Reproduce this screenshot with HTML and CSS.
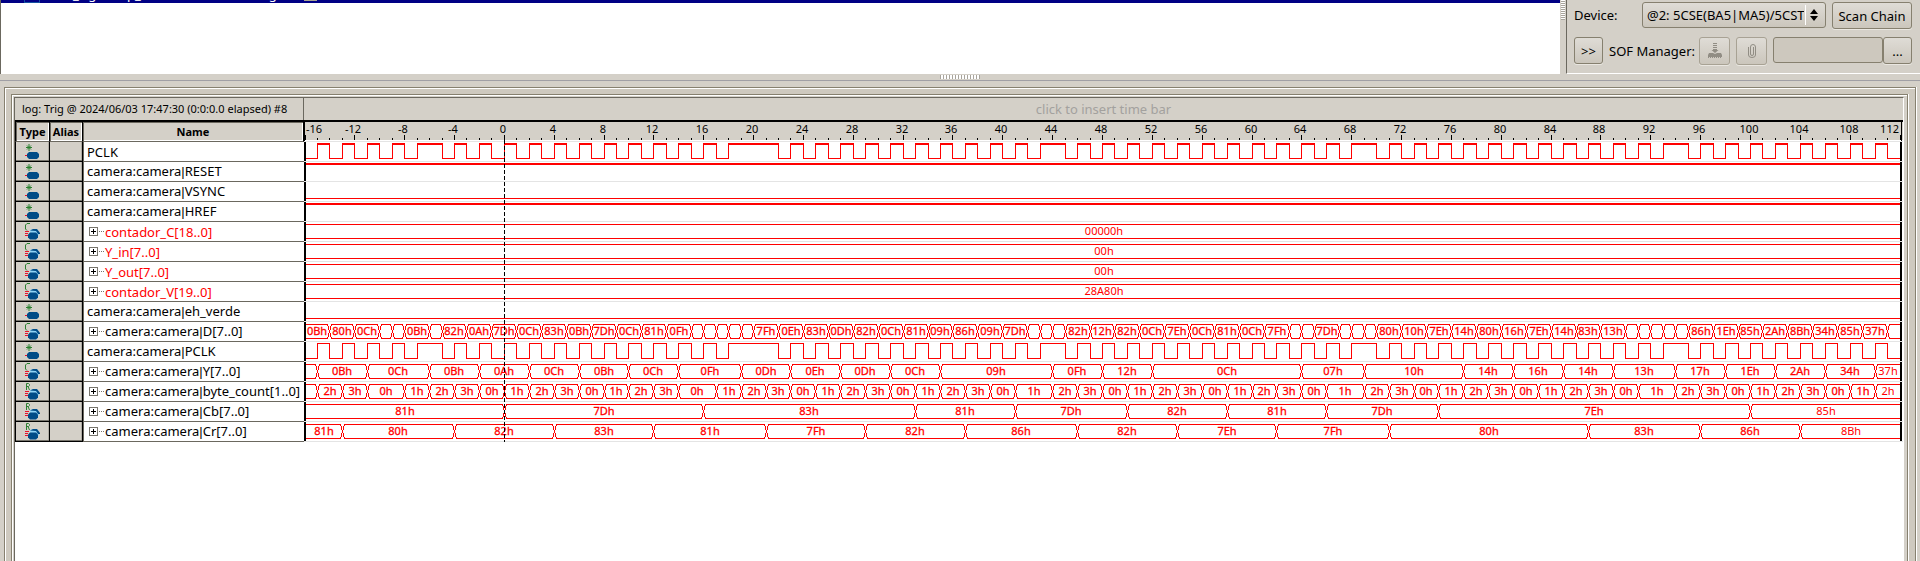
FILE: index.html
```html
<!DOCTYPE html>
<html lang="en">
<head>
<meta charset="utf-8">
<title>Signal Tap Logic Analyzer</title>
<link rel="stylesheet" href="styles.css">
</head>
<body>
<svg class="defs" aria-hidden="true">
  <symbol id="pin" viewBox="0 0 16 18">
    <path d="M5 1v7M2 4.500h6M3 2.500l4 4M7 2.500l-4 4" stroke="#2a8030" fill="none"/>
    <path d="M1 12.500h3" stroke="#e8102c"/>
    <path d="M5 9h8l2 2v3l-2 2H5l-2-2v-3z" fill="#004b87"/>
  </symbol>
  <symbol id="bus" viewBox="0 0 16 18">
    <path d="M1 8.500h4M1 10.500h3M1 12.500h3" stroke="#e8102c"/>
    <path d="M6 7l3-1h4l2 3v3l-2 2H7z" fill="#8fd3f5"/>
    <path d="M6 7.500L9 6h4l3 4v1h-2l-2-3z" fill="#004b87"/>
    <path d="M6 9.500h6l2 2v3l-2 2H6l-2-2v-3z" fill="#004b87"/>
  </symbol>
  <symbol id="comb" viewBox="0 0 16 18">
    <use href="#bus"/>
    <path d="M6 .5H3L1.500 2v4L3 7.500" stroke="#2a8030" fill="none"/>
  </symbol>
  <symbol id="reg" viewBox="0 0 16 18">
    <use href="#bus"/>
    <path d="M2.500 7V.5h2l1 1v1l-1 1h-2m1.500 0L5.500 7" stroke="#2a8030" fill="none"/>
  </symbol>
</svg>

<section class="top">
  <div class="instances">
    <div class="selected"><span class="box"></span><span class="inst">auto_signaltap_0</span><span class="status">Not running</span><span class="flag"></span></div>
  </div>
  <div class="vsplit"><span class="vgrip"></span></div>
  <form class="chain">
    <div class="line">
      <label class="dlabel" for="device">Device:</label>
      <span class="combo">
        <select id="device"><option>@2: 5CSE(BA5|MA5)/5CSTFD5D5/..</option></select>
        <svg class="arrows" viewBox="0 0 8 12" aria-hidden="true"><path d="M4 0l4 5H0zM4 12l4-5H0z"/></svg>
      </span>
      <button type="button" class="btn scan">Scan Chain</button>
    </div>
    <div class="line sof">
      <button type="button" class="btn more">&gt;&gt;</button>
      <label class="slabel" for="sof">SOF Manager:</label>
      <button type="button" class="btn icon" disabled aria-label="Program device">
        <svg viewBox="0 0 16 16" width="16" height="16"><path d="M6 .5h4M6 2.500h4M6 4.500h4" stroke="#918d84"/><path d="M6 6h4v1h1.500L8 10 4.500 7H6z" fill="#918d84"/><path d="M2 10h4l2 1 2-1h4l1 2v2H1v-2z" fill="#918d84"/><path d="M1 14.500h14" stroke="#918d84" stroke-dasharray="1 1"/></svg>
      </button>
      <button type="button" class="btn icon attach" disabled aria-label="Attach file">
        <svg viewBox="0 0 16 16" width="16" height="16"><path d="M4.500 4v8q0 2.500 3.500 2.500t3.500-2.500V4q0-2.500-2.500-2.500T6.500 4v7q0 1.500 1.500 1.500T9.500 11V4" fill="none" stroke="#918d84"/></svg>
      </button>
      <input id="sof" type="text" disabled>
      <button type="button" class="btn dots">...</button>
    </div>
  </form>
</section>
<div class="hsplit"><span class="hgrip"></span></div>

<main class="outer">
  <div class="inner">
    <div class="viewer">
      <div class="log">log: Trig @ 2024/06/03 17:47:30 (0:0:0.0 elapsed) #8</div>
      <div class="timebar">click to insert time bar</div>
      <table class="nodes">
        <thead><tr><th class="type">Type</th><th class="alias">Alias</th><th class="name">Name</th></tr></thead>
        <tbody id="nodes"></tbody>
      </table>
      <div class="waves" id="waves"></div>
    </div>
  </div>
</main>
<script src="script.js"></script>
</body>
</html>
```

FILE: styles.css
```css
* { box-sizing: border-box; }
body {
  margin: 0;
  height: 100vh;
  display: flex;
  flex-direction: column;
  overflow: hidden;
  background: #d4d0c8;
  color: #000;
  font-family: "Noto Sans", "Open Sans", sans-serif;
  font-size: 13px;
}
.defs { position: absolute; width: 0; height: 0; }

.top { display: flex; flex: none; height: 74px; }
.instances { flex: 1; background: #fff; border-left: 1px solid #6b685f; }
.selected {
  display: flex;
  align-items: flex-end;
  height: 3px;
  background: #000084;
  color: #fff;
  line-height: 18px;
  overflow: hidden;
  white-space: nowrap;
}
.box { width: 16px; height: 16px; margin-left: 23px; border: 1px solid #1450a0; }
.inst { width: 157px; margin-left: 5px; }
.status { width: 80px; }
.flag { width: 13px; height: 8px; margin-left: 22px; margin-bottom: 2px; background: #a8a490; }
.vsplit { width: 6px; padding-left: 1px; }
.vgrip {
  display: block;
  width: 4px;
  height: 20px;
  background: repeating-linear-gradient(#fff 0 1px, #a8a49c 1px 2px);
}
.chain {
  display: flex;
  flex-direction: column;
  width: 354px;
  padding: 2px 8px 0 7px;
  border-left: 1px solid #6b685f;
  border-bottom: 1px solid #fff;
}
.line { display: flex; align-items: flex-start; height: 35px; }
.dlabel, .slabel { line-height: 27px; white-space: nowrap; }
.dlabel { width: 68px; padding-left: 0; }
.slabel { width: 96px; padding-left: 6px; line-height: 28px; }
.combo { position: relative; width: 184px; margin-right: 6px; }
.combo select {
  display: block;
  width: 100%;
  height: 26px;
  padding: 0 21px 0 4px;
  appearance: none;
  font: inherit;
  color: #000;
}
.combo select, .btn {
  border: 1px solid #86806f;
  border-radius: 3px;
  background: linear-gradient(#dfdcd6, #cbc6bc);
}
.combo::after {
  content: "";
  position: absolute;
  right: 20px;
  top: 3px;
  bottom: 3px;
  width: 1px;
  background: #fff;
}
.arrows { position: absolute; right: 8px; top: 7px; width: 8px; height: 12px; }
.btn {
  height: 27px;
  padding: 0;
  font: inherit;
  color: #000;
  box-shadow: 0 1px 0 #eae7e1;
}
.scan { width: 80px; }
.more { width: 29px; }
.icon {
  display: flex;
  align-items: center;
  justify-content: center;
  width: 31px;
  height: 28px;
  border-color: #a8a294;
}
.attach { margin: 0 6px; }
.sof input {
  flex: 1;
  min-width: 0;
  height: 26px;
  border: 1px solid #86806f;
  border-radius: 3px;
  background: #cdc8be;
}
.dots { width: 29px; }

.hsplit {
  flex: none;
  height: 7px;
  padding-top: 1px;
  border-bottom: 1px solid #a09fa5;
}
.hgrip {
  display: block;
  width: 40px;
  height: 4px;
  margin: 0 auto;
  background: repeating-linear-gradient(90deg, #a8a49c 0 1px, #fff 1px 3px);
}

.outer, .inner {
  display: flex;
  flex: 1;
  min-height: 0;
  border-style: solid;
  border-width: 1px 1px 0;
  border-color: #86806f;
  box-shadow: inset 1px 1px 0 #fff, 1px 0 0 #fff;
}
.outer { margin: 6px 4px 0; padding: 6px 7px 0 6px; background: #cec9bf; }
.inner { padding: 2px 3px 0 2px; background: #d4d0c8; }
.viewer {
  flex: 1;
  display: grid;
  grid-template-columns: 289px minmax(0, 1fr);
  grid-template-rows: 22px 1fr;
  border-top: 1px solid #6b685f;
  border-left: 1px solid #6b685f;
  border-right: 1px solid #fff;
  background: #fff;
}
.log, .timebar { background: #d4d0c8; white-space: nowrap; line-height: 22px; }
.log { padding-left: 7px; font-size: 11px; border-right: 1px solid #6b685f; }
.timebar { text-align: center; color: #a3a19e; }

.nodes {
  width: 289px;
  height: 322px;
  border-collapse: separate;
  border-spacing: 0;
  table-layout: fixed;
  border-top: 2px solid #000;
}
.nodes th, .nodes td { height: 20px; padding: 0; line-height: 18px; }
.nodes th {
  background: #d4d0c8;
  font-size: 11px;
  border-bottom: 1px solid #6b685f;
  border-right: 1px solid #000;
  box-shadow: inset 1px 1px 0 #6b685f, inset -1px -1px 0 #fff;
}
.nodes .type { width: 35px; border-left: 1px solid #000; }
.nodes .alias { width: 33px; }
.nodes td.type, .nodes td.alias {
  background: #d4d0c8;
  border-bottom: 1px solid #000;
  border-right: 1px solid #000;
  box-shadow: inset 0 -1px 0 #77746c, inset -1px 0 0 #b0aca4;
}
.nodes td.name {
  padding-left: 3px;
  border-left: 1px solid #6b685f;
  border-bottom: 1px solid #6b685f;
  white-space: nowrap;
}
.glyph { display: block; width: 16px; height: 18px; margin: 1px 0 0 8px; }
.group { display: flex; align-items: center; padding-left: 2px; }
.plus {
  flex: none;
  width: 9px;
  height: 9px;
  padding: 0;
  border: 1px solid #77746c;
  background:
    linear-gradient(#000, #000) center / 5px 1px no-repeat,
    linear-gradient(#000, #000) center / 1px 5px no-repeat,
    #fff;
}
.stem { flex: none; width: 5px; margin: 0 1px; border-top: 1px dotted #77746c; }
.bar { font-family: "Liberation Sans", sans-serif; }
.unassigned { color: #f00; }

.waves { overflow: hidden; border-top: 2px solid #000; }
.plot { display: block; }
.ruler { fill: #d4d0c8; }
.tick, .edge { fill: #000; }
.sep { fill: #e4e4e4; }
.num { font-size: 11px; fill: #000; text-anchor: middle; }
.num.first { text-anchor: start; }
.num.last { text-anchor: end; }
.trace { fill: none; stroke: #f00; shape-rendering: crispEdges; }
.high { fill: #f00; }
.val { font-size: 11px; fill: #f00; stroke: #f00; stroke-width: .3px; text-anchor: middle; }
.cut { stroke: none; }
.cursor { stroke: #000; stroke-dasharray: 4 2; shape-rendering: crispEdges; }
```

FILE: script.js
```javascript
const START = -16;
const END = 112;
const ROW = 20;

const clockEdges = [];
for (const [from, to] of [[-15, -7], [-4, 18], [23, 43], [46, 68], [71, 93], [96, 111]]) {
  for (let t = from; t <= to; t++) clockEdges.push(t);
}
clockEdges.push(-5, 22, 45, 70, 95);
clockEdges.sort((a, b) => a - b);

// Bus data is "start:value" pairs; an empty value is too short to print.
const parse = text => text.split(' ').map(item => {
  const [t, v] = item.split(':');
  return [Number(t), v ? v + 'h' : ''];
});

const counterTimes = [-15, -13, -11, -8, -6, -4, -2, 0, 2, 4, 6, 8, 10, 12, 14, 17, 19, 21, 23, 25, 27, 29, 31,
  33, 35, 37, 39, 41, 44, 46, 48, 50, 52, 54, 56, 58, 60, 62, 64, 66, 69, 71, 73, 75, 77, 79, 81, 83, 85, 87,
  89, 91, 94, 96, 98, 100, 102, 104, 106, 108, 110];
const counter = [[-16, '']].concat(counterTimes.map((t, i) => [t, (i + 2) % 4 + 'h']));

const rows = [
  { name: 'PCLK', icon: 'pin', clock: true, thick: true },
  { name: 'camera:camera|RESET', icon: 'pin', level: 1 },
  { name: 'camera:camera|VSYNC', icon: 'pin', level: 0 },
  { name: 'camera:camera|HREF', icon: 'pin', level: 1 },
  { name: 'contador_C[18..0]', icon: 'comb', red: true, bus: parse('-16:00000') },
  { name: 'Y_in[7..0]', icon: 'comb', red: true, bus: parse('-16:00') },
  { name: 'Y_out[7..0]', icon: 'comb', red: true, bus: parse('-16:00') },
  { name: 'contador_V[19..0]', icon: 'comb', red: true, bus: parse('-16:28A80') },
  { name: 'camera:camera|eh_verde', icon: 'pin', level: 0 },
  { name: 'camera:camera|D[7..0]', icon: 'comb', bus: parse('-16:0B -14:80 -12:0C -10: -9: -8:0B -6: -5:82 -3:0A -1:7D 1:0C 3:83 5:0B 7:7D 9:0C 11:81 13:0F 15: 16: 17: 18: 19: 20:7F 22:0E 24:83 26:0D 28:82 30:0C 32:81 34:09 36:86 38:09 40:7D 42: 43: 44: 45:82 47:12 49:82 51:0C 53:7E 55:0C 57:81 59:0C 61:7F 63: 64: 65:7D 67: 68: 69: 70:80 72:10 74:7E 76:14 78:80 80:16 82:7E 84:14 86:83 88:13 90: 91: 92: 93: 94: 95:86 97:1E 99:85 101:2A 103:8B 105:34 107:85 109:37 111:') },
  { name: 'camera:camera|PCLK', icon: 'pin', clock: true },
  { name: 'camera:camera|Y[7..0]', icon: 'comb', bus: parse('-16: -15:0B -11:0C -6:0B -2:0A 2:0C 6:0B 10:0C 14:0F 19:0D 23:0E 27:0D 31:0C 35:09 44:0F 48:12 52:0C 64:07 69:10 77:14 81:16 85:14 89:13 94:17 98:1E 102:2A 106:34 110:37') },
  { name: 'camera:camera|byte_count[1..0]', icon: 'reg', bus: counter },
  { name: 'camera:camera|Cb[7..0]', icon: 'reg', bus: parse('-16:81 0:7D 16:83 33:81 41:7D 50:82 58:81 66:7D 75:7E 100:85') },
  { name: 'camera:camera|Cr[7..0]', icon: 'reg', bus: parse('-16:81 -13:80 -4:82 4:83 12:81 21:7F 29:82 37:86 46:82 54:7E 62:7F 71:80 87:83 96:86 104:8B') }
];

document.getElementById('nodes').innerHTML = rows.map(r => {
  const text = r.name.replace('|', '<span class="bar">|</span>');
  const label = r.bus
    ? `<div class="group"><button type="button" class="plus" aria-label="Expand ${r.name}"></button><span class="stem"></span><span class="${r.red ? 'unassigned' : ''}">${text}</span></div>`
    : text;
  return `<tr><td class="type"><svg class="glyph"><use href="#${r.icon}"/></svg></td><td class="alias"></td><td class="name">${label}</td></tr>`;
}).join('');

const host = document.getElementById('waves');

function draw() {
  const width = host.clientWidth;
  const x = t => Math.floor(1 + (t - START) * (width - 4) / (END - START));
  const rect = (cls, px, py, w, h) => `<rect class="${cls}" x="${px}" y="${py}" width="${w}" height="${h}"/>`;
  const height = ROW * (rows.length + 1);
  const right = width - 3;
  let out = rect('ruler', 0, 0, width, 18) + rect('sep', 0, 19, width, 1);

  for (let t = START; t <= END; t++) {
    const major = t % 4 === 0;
    out += rect('tick', x(t), major ? 13 : 16, 1, major ? 5 : 2);
    if (!major) continue;
    if (t === START) out += `<text class="num first" x="2" y="11">${t}</text>`;
    else if (t === END) out += `<text class="num last" x="${width - 4}" y="11">${t}</text>`;
    else out += `<text class="num" x="${x(t) - 1}" y="11">${t}</text>`;
  }

  rows.forEach((r, i) => {
    const y = ROW * (i + 1);
    const hi = y + 1.5;
    const lo = y + 16.5;
    out += rect('sep', 0, y + 19, width, 1);
    if (r.clock) {
      let d = `M2 ${lo}`;
      let up = false;
      clockEdges.forEach((t, k) => {
        const px = x(t) + 0.5;
        up = !up;
        d += `H${px}V${up ? hi : lo}`;
        if (up && r.thick) out += rect('high', x(t), y + 1, x(clockEdges[k + 1]) - x(t) + 1, 2);
      });
      out += `<path class="trace" d="${d}H${right}"/>`;
    } else if (r.bus) {
      const top = y + 2.5;
      let d = '';
      r.bus.forEach(([t, v], k) => {
        const last = k === r.bus.length - 1;
        const a = k ? x(t) + 0.5 : 2;
        const b = last ? width - 1 : x(r.bus[k + 1][0]) + 0.5;
        const l = k ? a + 3 : a;
        const e = last ? b : b - 3;
        d += `M${l} ${top}H${e}M${l} ${lo}H${e}`;
        if (k) d += `M${a - 3} ${top}h1L${a + 2} ${lo}h1M${a - 3} ${lo}h1L${a + 2} ${top}h1`;
        if (v) out += `<text class="val${last ? ' cut' : ''}" x="${Math.floor((a + b) / 2)}" y="${y + 13}">${v}</text>`;
      });
      out += `<path class="trace" d="${d}"/>`;
    } else if (r.level) {
      out += rect('high', 2, y + 1, right, 2);
    } else {
      out += `<path class="trace" d="M2 ${lo}H${right}"/>`;
    }
    out += rect('edge', 0, y, 2, 19) + rect('edge', width - 3, y, 2, 19);
  });
  out += rect('edge', 0, 0, 1, 19) + rect('edge', width - 2, 0, 1, 19);
  out += `<path class="cursor" d="M${x(0) + 0.5} 18V${height}"/>`;
  host.innerHTML = `<svg class="plot" width="${width}" height="${height}" role="img" aria-label="Captured waveforms">${out}</svg>`;
}

draw();
window.addEventListener('resize', draw);
```
